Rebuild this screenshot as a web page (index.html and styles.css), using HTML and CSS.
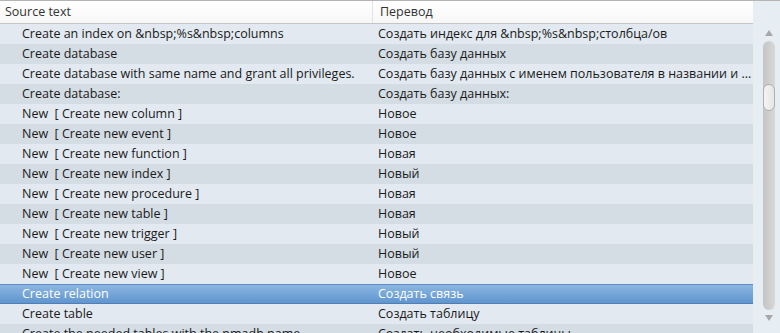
FILE: index.html
```html
<!DOCTYPE html>
<html lang="en">
<head>
  <meta charset="UTF-8" />
  <title>Translations</title>
  <link rel="stylesheet" href="styles.css">
</head>
<body>
<div class="view">
  <div class="list">
    <div class="header">
      <div class="col src">Source text</div>
      <div class="col dst">Перевод</div>
    </div>
    <div class="rows">
      <div class="row"><div class="col src">Create an index on &amp;nbsp;%s&amp;nbsp;columns</div><div class="col dst">Создать индекс для &amp;nbsp;%s&amp;nbsp;столбца/ов</div></div>
      <div class="row"><div class="col src">Create database</div><div class="col dst">Создать базу данных</div></div>
      <div class="row"><div class="col src">Create database with same name and grant all privileges.</div><div class="col dst">Создать базу данных с именем пользователя в названии и ...</div></div>
      <div class="row"><div class="col src">Create database:</div><div class="col dst">Создать базу данных:</div></div>
      <div class="row"><div class="col src">New&nbsp; [ Create new column ]</div><div class="col dst">Новое</div></div>
      <div class="row"><div class="col src">New&nbsp; [ Create new event ]</div><div class="col dst">Новое</div></div>
      <div class="row"><div class="col src">New&nbsp; [ Create new function ]</div><div class="col dst">Новая</div></div>
      <div class="row"><div class="col src">New&nbsp; [ Create new index ]</div><div class="col dst">Новый</div></div>
      <div class="row"><div class="col src">New&nbsp; [ Create new procedure ]</div><div class="col dst">Новая</div></div>
      <div class="row"><div class="col src">New&nbsp; [ Create new table ]</div><div class="col dst">Новая</div></div>
      <div class="row"><div class="col src">New&nbsp; [ Create new trigger ]</div><div class="col dst">Новый</div></div>
      <div class="row"><div class="col src">New&nbsp; [ Create new user ]</div><div class="col dst">Новый</div></div>
      <div class="row"><div class="col src">New&nbsp; [ Create new view ]</div><div class="col dst">Новое</div></div>
      <div class="row selected"><div class="col src">Create relation</div><div class="col dst">Создать связь</div></div>
      <div class="row"><div class="col src">Create table</div><div class="col dst">Создать таблицу</div></div>
      <div class="row"><div class="col src">Create the needed tables with the pmadb name</div><div class="col dst">Создать необходимые таблицы</div></div>
    </div>
  </div>
  <div class="scrollbar">
    <div class="arrow up"></div>
    <div class="track"><div class="thumb"></div></div>
    <div class="arrow down"></div>
  </div>
</div>
</body>
</html>
```

FILE: styles.css
```css
body {
  margin: 0;
  background-color: #e6edf3;
  font-family: 'Open Sans', sans-serif;
  font-size: 12.5px;
  color: #1a1a1a;
  overflow: hidden;
}

.view {
  display: flex;
  height: 333px;
  border-top: 1px solid #b4b4b4;
  box-sizing: border-box;
}

.list {
  flex: 1;
  display: flex;
  flex-direction: column;
  overflow: hidden;
}

.header {
  display: flex;
  height: 22px;
  flex-shrink: 0;
  background: linear-gradient(#ffffff, #f7f7f7);
  border-bottom: 1px solid #c4c4c4;
  width: 780px;
  color: #333;
}

.header .col {
  line-height: 22px;
}

.header .src {
  padding-left: 5px;
  width: 367px;
  border-right: 1px solid #e2e2e2;
}

.header .dst {
  padding-left: 7px;
}

.rows {
  display: flex;
  flex-direction: column;
  width: 753px;
}

.row {
  display: flex;
  height: 20px;
  flex-shrink: 0;
  line-height: 20px;
  background-color: #e2e9f0;
  white-space: nowrap;
}

.row:nth-child(even) {
  background-color: #d4dce4;
}

.row .src {
  width: 356px;
  padding-left: 22px;
  overflow: hidden;
}

.row .dst {
  flex: 1;
  overflow: hidden;
}

.row.selected {
  background: linear-gradient(#8db8e2, #5e93cd);
  box-shadow: inset 0 1px 0 #5d8cc0, inset 0 -1px 0 #4f7fb5;
  color: #fff;
}

.scrollbar {
  width: 27px;
  margin-top: 23px;
  display: flex;
  flex-direction: column;
  align-items: center;
}

.arrow {
  width: 0;
  height: 0;
  border-left: 4px solid transparent;
  border-right: 4px solid transparent;
  margin: 6px 0 5px 4px;
}

.arrow.up {
  border-bottom: 6px solid #a8a8a8;
}

.arrow.down {
  border-top: 6px solid #a8a8a8;
  margin: 5px 0 12px 4px;
}

.track {
  flex: 1;
  width: 12px;
  margin-left: 4px;
  border-radius: 6px;
  background: linear-gradient(90deg, #c4c4c4, #d8d8d8);
  display: flex;
  flex-direction: column;
}

.thumb {
  height: 27px;
  margin-top: 43px;
  border-radius: 6px;
  border: 1px solid #b0b0b0;
  background: linear-gradient(90deg, #f4f4f4, #e6e6e6);
  box-sizing: border-box;
}
```
